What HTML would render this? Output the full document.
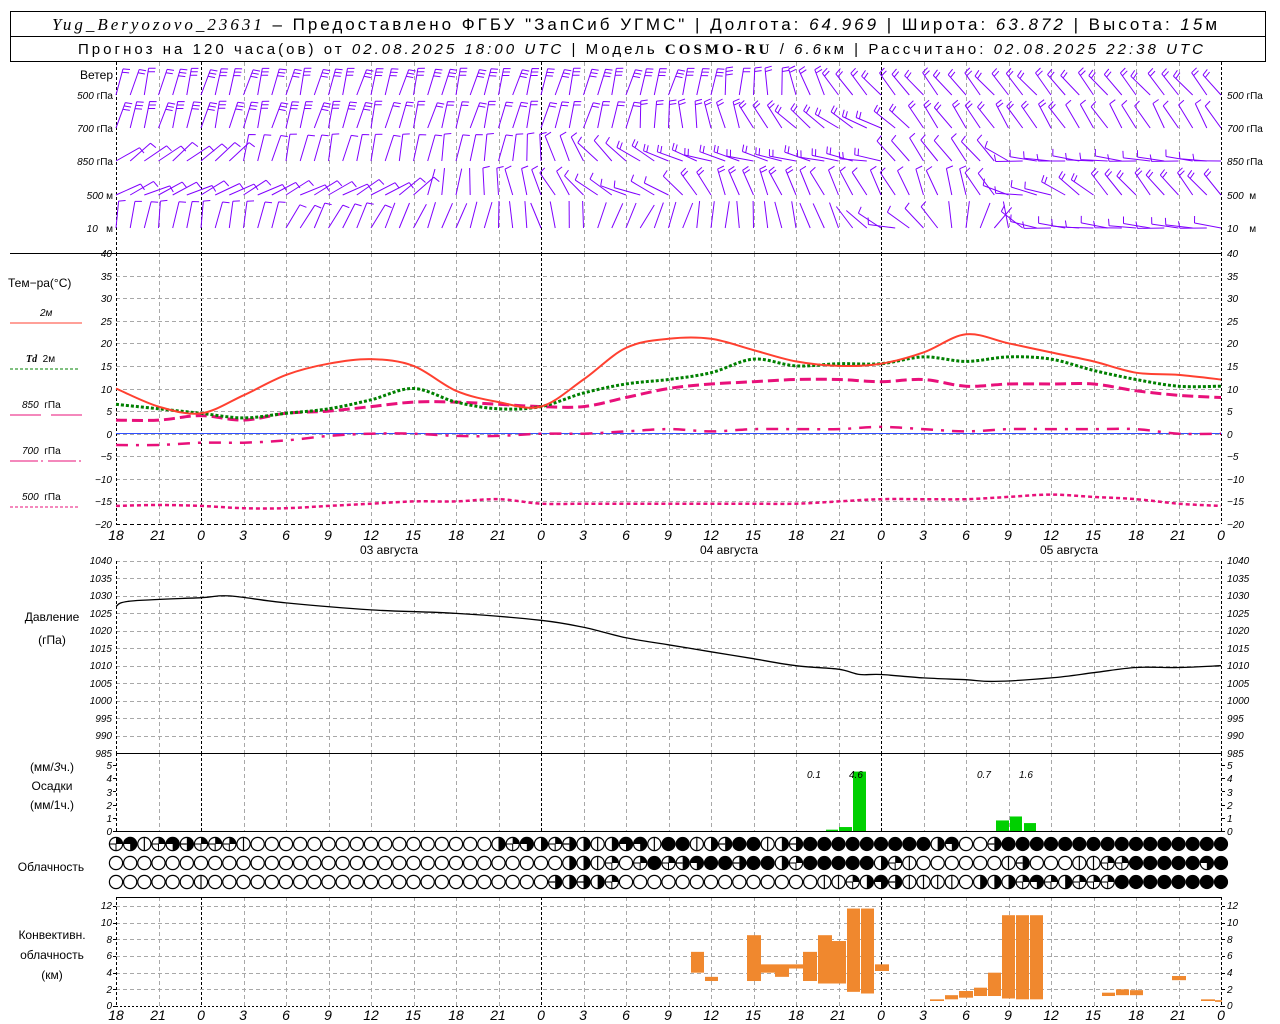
<!DOCTYPE html>
<html><head><meta charset="utf-8"><style>
html,body{margin:0;padding:0;background:#fff;width:1280px;height:1024px;overflow:hidden}
svg{display:block}
.ax{font-family:"Liberation Sans",sans-serif;font-style:italic;font-size:10px;fill:#000}
.lb{font-family:"Liberation Sans",sans-serif;font-size:12px;fill:#000}
.xl{font-family:"Liberation Sans",sans-serif;font-style:italic;font-size:14px;fill:#000;text-anchor:middle}
</style></head><body>
<svg id="s" width="1280" height="1024" xmlns="http://www.w3.org/2000/svg">
<rect x="10.5" y="11.5" width="1255" height="50" fill="none" stroke="#000"/>
<line x1="10" y1="36.5" x2="1266" y2="36.5" stroke="#000"/>
<text x="52" y="30" font-size="17" font-family="Liberation Sans, sans-serif" letter-spacing="1" textLength="1166" lengthAdjust="spacing"><tspan font-family="Liberation Serif, serif" font-style="italic">Yug_Beryozovo_23631</tspan> – Предоставлено ФГБУ "ЗапСиб УГМС" | Долгота: <tspan font-style="italic">64.969</tspan> | Широта: <tspan font-style="italic">63.872</tspan> | Высота: <tspan font-style="italic">15</tspan>м</text>
<text x="78" y="54" font-size="15" font-family="Liberation Sans, sans-serif" textLength="1125" lengthAdjust="spacing">Прогноз на 120 часа(ов) от <tspan font-style="italic">02.08.2025 18:00 UTC</tspan>  | Модель <tspan font-family="Liberation Serif, serif" font-weight="bold">COSMO-RU</tspan> / <tspan font-style="italic">6.6</tspan>км | Рассчитано: <tspan font-style="italic">02.08.2025 22:38 UTC</tspan></text>

<g id="grid"></g>
<g id="data"></g>

<text class="lb" x="113" y="79" text-anchor="end">Ветер</text>
<g class="ax" text-anchor="end">
<text x="113" y="99">500 <tspan font-style="normal">гПа</tspan></text>
<text x="113" y="132">700 <tspan font-style="normal">гПа</tspan></text>
<text x="113" y="165">850 <tspan font-style="normal">гПа</tspan></text>
<text x="113" y="199">500 <tspan font-style="normal">м</tspan></text>
<text x="113" y="232">10 <tspan font-style="normal">&#160;&#160;м</tspan></text>
</g>
<g class="ax">
<text x="1227" y="99">500 <tspan font-style="normal">гПа</tspan></text>
<text x="1227" y="132">700 <tspan font-style="normal">гПа</tspan></text>
<text x="1227" y="165">850 <tspan font-style="normal">гПа</tspan></text>
<text x="1227" y="199">500 <tspan font-style="normal">&#160;м</tspan></text>
<text x="1227" y="232">10 <tspan font-style="normal">&#160;&#160;&#160;м</tspan></text>
</g>

<text class="lb" x="8" y="287">Тем−ра(°С)</text>
<text class="ax" x="40" y="316" font-style="normal">2м</text>
<line x1="10" y1="323" x2="82" y2="323" stroke="#ff4030" stroke-width="1"/>
<text class="ax" x="26" y="362"><tspan font-family="Liberation Serif,serif" font-weight="bold">Td</tspan> <tspan font-style="normal">&#160;2м</tspan></text>
<line x1="10" y1="369" x2="78" y2="369" stroke="#008000" stroke-dasharray="3,2"/>
<text class="ax" x="22" y="408">850 <tspan font-style="normal">&#160;гПа</tspan></text>
<line x1="10" y1="415" x2="41" y2="415" stroke="#e8107a"/><line x1="51" y1="415" x2="82" y2="415" stroke="#e8107a"/>
<text class="ax" x="22" y="454">700 <tspan font-style="normal">&#160;гПа</tspan></text>
<path d="M10 461h28M41 461h2M48 461h28M79 461h2" stroke="#e8107a"/>
<text class="ax" x="22" y="500">500 <tspan font-style="normal">&#160;гПа</tspan></text>
<line x1="10" y1="507" x2="78" y2="507" stroke="#e8107a" stroke-dasharray="3,2"/>

<text class="lb" x="52" y="621" text-anchor="middle">Давление</text>
<text class="lb" x="52" y="644" text-anchor="middle">(гПа)</text>
<text class="lb" x="52" y="771" text-anchor="middle">(мм/<tspan font-style="italic">3</tspan>ч.)</text>
<text class="lb" x="52" y="790" text-anchor="middle">Осадки</text>
<text class="lb" x="52" y="809" text-anchor="middle">(мм/1ч.)</text>
<text class="lb" x="51" y="871" text-anchor="middle">Облачность</text>
<text class="lb" x="52" y="939" text-anchor="middle">Конвективн.</text>
<text class="lb" x="52" y="959" text-anchor="middle">облачность</text>
<text class="lb" x="52" y="979" text-anchor="middle">(км)</text>

<g class="ax" text-anchor="end">
<text x="112" y="257">40</text><text x="112" y="280">35</text><text x="112" y="302">30</text><text x="112" y="325">25</text><text x="112" y="347">20</text><text x="112" y="370">15</text><text x="112" y="393">10</text><text x="112" y="415">5</text><text x="112" y="438">0</text><text x="112" y="460">−5</text><text x="112" y="483">−10</text><text x="112" y="505">−15</text><text x="112" y="528">−20</text>
</g>
<g class="ax">
<text x="1227" y="257">40</text><text x="1227" y="280">35</text><text x="1227" y="302">30</text><text x="1227" y="325">25</text><text x="1227" y="347">20</text><text x="1227" y="370">15</text><text x="1227" y="393">10</text><text x="1227" y="415">5</text><text x="1227" y="438">0</text><text x="1227" y="460">−5</text><text x="1227" y="483">−10</text><text x="1227" y="505">−15</text><text x="1227" y="528">−20</text>
</g>
<g class="ax" text-anchor="end" font-size="9">
<text x="112" y="564">1040</text><text x="112" y="582">1035</text><text x="112" y="599">1030</text><text x="112" y="617">1025</text><text x="112" y="634">1020</text><text x="112" y="652">1015</text><text x="112" y="669">1010</text><text x="112" y="687">1005</text><text x="112" y="704">1000</text><text x="112" y="722">995</text><text x="112" y="739">990</text><text x="112" y="757">985</text>
</g>
<g class="ax" font-size="9">
<text x="1227" y="564">1040</text><text x="1227" y="582">1035</text><text x="1227" y="599">1030</text><text x="1227" y="617">1025</text><text x="1227" y="634">1020</text><text x="1227" y="652">1015</text><text x="1227" y="669">1010</text><text x="1227" y="687">1005</text><text x="1227" y="704">1000</text><text x="1227" y="722">995</text><text x="1227" y="739">990</text><text x="1227" y="757">985</text>
</g>
<g class="ax" text-anchor="end" font-size="9">
<text x="112" y="769">5</text><text x="112" y="782">4</text><text x="112" y="796">3</text><text x="112" y="809">2</text><text x="112" y="822">1</text><text x="112" y="835">0</text>
</g>
<g class="ax" font-size="9">
<text x="1227" y="769">5</text><text x="1227" y="782">4</text><text x="1227" y="796">3</text><text x="1227" y="809">2</text><text x="1227" y="822">1</text><text x="1227" y="835">0</text>
</g>
<g class="ax" font-size="12">
<text x="807" y="778">0.1</text><text x="849" y="778">4.6</text><text x="977" y="778">0.7</text><text x="1019" y="778">1.6</text>
</g>
<g class="ax" text-anchor="end" font-size="9">
<text x="112" y="1009">0</text><text x="112" y="993">2</text><text x="112" y="976">4</text><text x="112" y="959">6</text><text x="112" y="943">8</text><text x="112" y="926">10</text><text x="112" y="909">12</text>
</g>
<g class="ax" font-size="9">
<text x="1227" y="1009">0</text><text x="1227" y="993">2</text><text x="1227" y="976">4</text><text x="1227" y="959">6</text><text x="1227" y="943">8</text><text x="1227" y="926">10</text><text x="1227" y="909">12</text>
</g>

<g class="xl">
<text x="116" y="540">18</text><text x="158" y="540">21</text><text x="201" y="540">0</text><text x="243" y="540">3</text><text x="286" y="540">6</text><text x="328" y="540">9</text><text x="371" y="540">12</text><text x="413" y="540">15</text><text x="456" y="540">18</text><text x="498" y="540">21</text><text x="541" y="540">0</text><text x="583" y="540">3</text><text x="626" y="540">6</text><text x="668" y="540">9</text><text x="711" y="540">12</text><text x="753" y="540">15</text><text x="796" y="540">18</text><text x="838" y="540">21</text><text x="881" y="540">0</text><text x="923" y="540">3</text><text x="966" y="540">6</text><text x="1008" y="540">9</text><text x="1051" y="540">12</text><text x="1093" y="540">15</text><text x="1136" y="540">18</text><text x="1178" y="540">21</text><text x="1221" y="540">0</text>
</g>
<g class="xl">
<text x="116" y="1020">18</text><text x="158" y="1020">21</text><text x="201" y="1020">0</text><text x="243" y="1020">3</text><text x="286" y="1020">6</text><text x="328" y="1020">9</text><text x="371" y="1020">12</text><text x="413" y="1020">15</text><text x="456" y="1020">18</text><text x="498" y="1020">21</text><text x="541" y="1020">0</text><text x="583" y="1020">3</text><text x="626" y="1020">6</text><text x="668" y="1020">9</text><text x="711" y="1020">12</text><text x="753" y="1020">15</text><text x="796" y="1020">18</text><text x="838" y="1020">21</text><text x="881" y="1020">0</text><text x="923" y="1020">3</text><text x="966" y="1020">6</text><text x="1008" y="1020">9</text><text x="1051" y="1020">12</text><text x="1093" y="1020">15</text><text x="1136" y="1020">18</text><text x="1178" y="1020">21</text><text x="1221" y="1020">0</text>
</g>
<g class="lb" text-anchor="middle" font-size="13">
<text x="389" y="554">03 августа</text><text x="729" y="554">04 августа</text><text x="1069" y="554">05 августа</text>
</g>
</svg>
<script>
(function(){
var NS="http://www.w3.org/2000/svg";
var G=document.getElementById("grid"),D=document.getElementById("data");
function el(p,t,a){var e=document.createElementNS(NS,t);for(var k in a)e.setAttribute(k,a[k]);p.appendChild(e);return e;}
function X(h){return 116+h*340/24;}
function YT(t){return 524-(t+20)*271/60;}
function YP(p){return 561+(1040-p)*192/55;}
function YR(v){return 831-v*13.2;}
function YC(k){return 1006-k*8.33;}
var panels=[[62,253],[253,524],[561,753],[753,831],[897,1006]];
for(var h=3;h<78;h+=3){
  var x=Math.round(X(h))+0.5, mid=(h%24==6);
  panels.forEach(function(p){
    el(G,"line",{x1:x,y1:p[0],x2:x,y2:p[1],stroke:mid?"#000":"#a8a8a8","stroke-dasharray":mid?"3,2":"4,3","stroke-width":1});
  });
}
for(var t=35;t>=-20;t-=5){var y=Math.round(YT(t))+0.5;el(G,"line",{x1:116,y1:y,x2:1222,y2:y,stroke:t==-20?"#000":"#a8a8a8","stroke-dasharray":"4,3"});}
for(var p=1040;p>=990;p-=5){var y=Math.round(YP(p))+0.5;el(G,"line",{x1:116,y1:y,x2:1222,y2:y,stroke:"#a8a8a8","stroke-dasharray":"4,3"});}
for(var k=2;k<=12;k+=2){var y=Math.round(YC(k))+0.5;el(G,"line",{x1:116,y1:y,x2:1222,y2:y,stroke:"#a8a8a8","stroke-dasharray":"4,3"});}
el(G,"line",{x1:116,y1:1006.5,x2:1222,y2:1006.5,stroke:"#000","stroke-dasharray":"2,2"});
[[253.5],[753.5],[831.5],[897.5]].forEach(function(a){el(G,"line",{x1:116,y1:a[0],x2:1222,y2:a[0],stroke:"#000"});});
el(G,"line",{x1:10,y1:253.5,x2:116,y2:253.5,stroke:"#000"});
[116.5,1221.5].forEach(function(x){panels.forEach(function(p){el(G,"line",{x1:x,y1:p[0],x2:x,y2:p[1],stroke:"#000","stroke-dasharray":"3,2"});});});
function ticks(vals,f){vals.forEach(function(v){var y=Math.round(f(v))+0.5;el(G,"line",{x1:113,y1:y,x2:116,y2:y,stroke:"#000"});el(G,"line",{x1:1222,y1:y,x2:1225,y2:y,stroke:"#000"});});}
ticks([0,1,2,3,4,5],YR);ticks([0,2,4,6,8,10,12],YC);
el(D,"line",{x1:116,y1:433.5,x2:1222,y2:433.5,stroke:"#3050ff","stroke-width":1});
function smooth(P){var d="M"+P[0][0].toFixed(1)+" "+P[0][1].toFixed(1);
 for(var i=0;i<P.length-1;i++){var p0=P[i-1]||P[i],p1=P[i],p2=P[i+1],p3=P[i+2]||P[i+1];
  d+="C"+(p1[0]+(p2[0]-p0[0])/6).toFixed(1)+" "+(p1[1]+(p2[1]-p0[1])/6).toFixed(1)+" "+(p2[0]-(p3[0]-p1[0])/6).toFixed(1)+" "+(p2[1]-(p3[1]-p1[1])/6).toFixed(1)+" "+p2[0].toFixed(1)+" "+p2[1].toFixed(1);}
 return d;}
function line(vals,fy,attrs){var P=vals.map(function(v,i){return [X(i*3),fy(v)];});attrs.d=smooth(P);attrs.fill="none";el(D,"path",attrs);}
var T2=[10,6,4.5,8.5,13,15.5,16.5,15,9.5,7,6,12,19,21,21,18.5,16,15,15.5,18,22,20,18,16,13.5,13,12];
var TD=[6.5,5.5,4.5,3.5,4.5,5.5,7.5,10,7,5.5,6,9,11,12,13.5,16.5,15,15.5,15.5,17,16,17,16.5,14,12,10.5,10.5];
var T85=[3,3,4,3,4.5,5,6,7,7,6.5,6,6,8,10,11,11.5,12,12,11.5,12,10.5,11,11,11,9.5,8.5,8];
var T70=[-2.5,-2.5,-2,-2,-1.5,-0.5,0,0,-0.5,-0.5,0,0,0.5,1,0.5,1,1,1,1.5,1,0.5,1,1,1,1,0,0];
var T50=[-16,-15.8,-16,-16.5,-16.5,-16,-15.5,-15,-15,-14.5,-15.5,-15.5,-15.5,-15.5,-15.5,-15.5,-15.5,-15,-14.5,-14.5,-14.5,-14,-13.5,-14,-14.5,-15.5,-16];
line(T50,YT,{stroke:"#e8107a","stroke-width":2.5,"stroke-dasharray":"4,3"});
line(T70,YT,{stroke:"#e8107a","stroke-width":2.5,"stroke-dasharray":"12,8,3,8"});
line(T85,YT,{stroke:"#e8107a","stroke-width":3,"stroke-dasharray":"11,5"});
line(TD,YT,{stroke:"#008000","stroke-width":3,"stroke-dasharray":"3,2"});
line(T2,YT,{stroke:"#ff4030","stroke-width":2});
var PP=[[0,1027],[1,1028.5],[6,1029.5],[8,1030],[12,1028],[18,1026],[24,1025],[30,1023],[33,1021],[36,1018],[39,1016],[42,1014],[45,1012],[48,1010],[51,1009],[52.5,1007.5],[54,1007.5],[57,1006.5],[60,1006],[62,1005.5],[66,1006.5],[69,1008],[72,1009.5],[75,1009.5],[78,1010]];
el(D,"path",{d:smooth(PP.map(function(a){return [X(a[0]),YP(a[1])];})),fill:"none",stroke:"#000","stroke-width":1.3});
[[826,838,0.1],[839,852,0.3],[853,866,4.5],[996,1009,0.8],[1010,1022,1.1],[1024,1036,0.6]].forEach(function(b){var y=YR(b[2]);el(D,"rect",{x:b[0],y:y,width:b[1]-b[0],height:831-y,fill:"#00d000"});});
[[691,704,4,6.5],[705,718,3,3.5],[747,761,3,8.5],[761,775,4,5],[775,789,3.5,5],[789,803,4.5,5],[803,817,3,6.5],[818,832,2.7,8.5],[832,846,2.7,7.8],[847,860,1.7,11.7],[861,874,1.5,11.7],[875,889,4.2,5],[930,944,0.6,0.8],[945,958,0.8,1.3],[959,973,1,1.8],[974,987,1.2,2.2],[988,1001,1.2,4],[1002,1015,0.9,10.9],[1016,1029,0.8,10.9],[1030,1043,0.8,10.9],[1102,1115,1.2,1.6],[1116,1129,1.3,2],[1130,1143,1.3,1.9],[1172,1186,3.1,3.6],[1201,1215,0.6,0.8],[1215,1222,0.5,0.7]].forEach(function(b){var y1=YC(b[3]),y2=YC(b[2]);el(D,"rect",{x:b[0],y:y1,width:b[1]-b[0],height:y2-y1,fill:"#f0882e"});});
var rows=["qtlqteqqql"+"00000000000000000"+"hqthqehlhttlfflhe"+"fflhe"+"fffffffff"+"ht00e"+"ffffffffffffffff",
"00000000000000000000000000000000"+"hhlq0qfqetffeff"+"hqfffffhql000000le000llqqffffftf",
"000000l"+"000000000000000000000000"+"ehehq"+"00000000000000"+"llqhtellll0hhhqtqhqqqffffffff"];
var rY=[844,863,882];
rows.forEach(function(s,r){for(var i=0;i<79;i++){var c=s.charAt(i)||"0",cx=X(i),cy=rY[r],R=6.6;
 var g=el(D,"g",{});
 if(c=="f"){el(g,"circle",{cx:cx,cy:cy,r:R+0.5,fill:"#000"});continue;}
 el(g,"circle",{cx:cx,cy:cy,r:R,fill:"#fff",stroke:"#000","stroke-width":1.2});
 if(c=="l"){el(g,"line",{x1:cx,y1:cy-R,x2:cx,y2:cy+R,stroke:"#000","stroke-width":1.2});}
 if(c=="q"){el(g,"path",{d:"M"+cx+" "+cy+"V"+(cy-R)+"A"+R+" "+R+" 0 0 1 "+(cx+R)+" "+cy+"Z",fill:"#000"});el(g,"line",{x1:cx,y1:cy,x2:cx,y2:cy+R,stroke:"#000"});el(g,"line",{x1:cx-R,y1:cy,x2:cx,y2:cy,stroke:"#000"});}
 if(c=="h"||c=="e"){el(g,"path",{d:"M"+cx+" "+(cy-R)+"A"+R+" "+R+" 0 0 1 "+cx+" "+(cy+R)+"Z",fill:"#000"});if(c=="e")el(g,"line",{x1:cx-R,y1:cy,x2:cx,y2:cy,stroke:"#000","stroke-width":1.2});}
 if(c=="t"){el(g,"path",{d:"M"+cx+" "+cy+"H"+(cx-R)+"A"+R+" "+R+" 0 1 1 "+cx+" "+(cy+R)+"Z",fill:"#000"});}
}});
var K=[
[[0,15,2],[8,15,3],[40,15,3],[46,0,2],[52,-40,2],[78,-40,2]],
[[0,15,3],[35,15,2],[44,-20,2],[48,-45,2],[54,-65,2],[57,-35,2],[78,-30,1]],
[[0,55,1],[8,50,1],[9,15,1],[28,10,1],[34,-40,1],[40,-70,2],[54,-80,2],[55,-35,1],[62,-40,1],[64,-85,1],[78,-85,1]],
[[0,65,1],[20,60,1],[22,15,0],[30,-20,1],[37,-75,1],[43,-20,2],[55,-30,1],[60,-10,1],[64,-85,1],[70,-40,2],[78,-40,2]],
[[0,10,1],[10,10,1],[12,30,1],[25,20,0],[30,-20,0],[36,30,0],[52,-30,0],[55,-80,1],[62,40,0],[65,-85,1],[78,-85,1]]];
var base=[95,128,161,195,228];
function interp(k,h){for(var j=0;j<k.length-1;j++){if(h<=k[j+1][0]){var a=k[j],b=k[j+1],f=(h-a[0])/(b[0]-a[0]);return [a[1]+(b[1]-a[1])*f,Math.round(a[2]+(b[2]-a[2])*f)];}}return [k[k.length-1][1],k[k.length-1][2]];}
K.forEach(function(k,r){for(var i=0;i<79;i++){
 var v=interp(k,i+0.3*Math.sin(i*1.7)),th=(v[0]+6*Math.sin(i*2.3+r))*Math.PI/180,n=v[1];
 var x0=X(i),y0=base[r],L=27,ux=Math.sin(th),uy=-Math.cos(th);
 var x1=x0+ux*L,y1=y0+uy*L,d="M"+x0.toFixed(1)+" "+y0+"L"+x1.toFixed(1)+" "+y1.toFixed(1);
 var fa=th+80*Math.PI/180,fx=Math.sin(fa)*7,fy=-Math.cos(fa)*7;
 for(var j=0;j<n;j++){var px=x1-ux*j*3.5,py=y1-uy*j*3.5;d+="M"+px.toFixed(1)+" "+py.toFixed(1)+"l"+fx.toFixed(1)+" "+fy.toFixed(1);}
 el(D,"path",{d:d,stroke:"#8000ff","stroke-width":1,fill:"none"});
}});
})();
</script>
</body></html>
